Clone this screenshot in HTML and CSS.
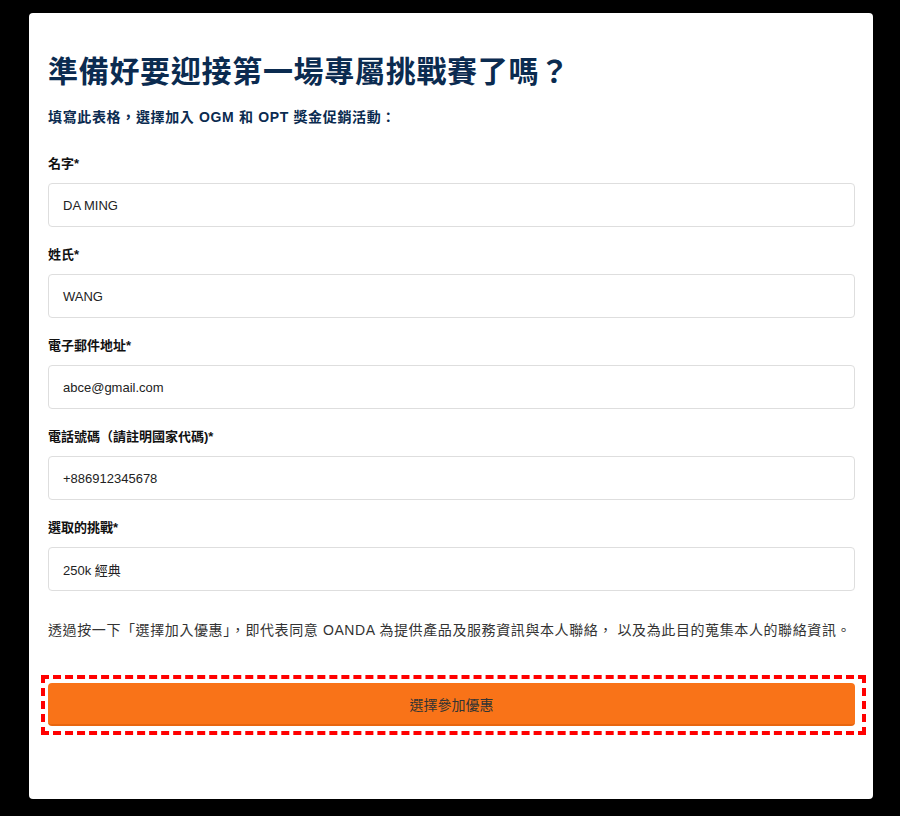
FILE: index.html
```html
<!DOCTYPE html>
<html lang="zh-Hant">
<head>
<meta charset="utf-8">
<title>準備好要迎接第一場專屬挑戰賽了嗎？</title>
<link rel="stylesheet" href="styles.css">
</head>
<body>
<main class="card">
  <h1 class="title">準備好要迎接第一場專屬挑戰賽了嗎？</h1>
  <p class="subtitle">填寫此表格，選擇加入 OGM 和 OPT 獎金促銷活動：</p>
  <form class="form">
    <div class="field">
      <label class="label">名字*</label>
      <div class="input">DA MING</div>
    </div>
    <div class="field">
      <label class="label">姓氏*</label>
      <div class="input">WANG</div>
    </div>
    <div class="field">
      <label class="label">電子郵件地址*</label>
      <div class="input">abce@gmail.com</div>
    </div>
    <div class="field">
      <label class="label">電話號碼（請註明國家代碼)*</label>
      <div class="input">+886912345678</div>
    </div>
    <div class="field">
      <label class="label">選取的挑戰*</label>
      <div class="input">250k 經典</div>
    </div>
    <p class="consent">透過按一下「選擇加入優惠」，即代表同意 OANDA 為提供產品及服務資訊與本人聯絡， 以及為此目的蒐集本人的聯絡資訊。</p>
    <div class="cta-frame">
      <button type="button" class="cta">選擇參加優惠</button>
    </div>
  </form>
</main>
</body>
</html>
```

FILE: styles.css
```css
html, body {
  margin: 0;
  padding: 0;
  background: #000;
}
body {
  font-family: "Liberation Sans", "Noto Sans CJK TC", sans-serif;
  padding: 13px 27px 17px 29px;
}
.card {
  background: #fff;
  border-radius: 4px;
  height: 786px;
  box-sizing: border-box;
  padding: 38px 18px 0 19px;
}
.title {
  margin: 0;
  font-family: "Noto Sans CJK TC", sans-serif;
  font-size: 30px;
  line-height: 36px;
  font-weight: 700;
  color: #0b2b50;
  letter-spacing: 0.7px;
}
.subtitle {
  margin: 20px 0 0;
  font-size: 14px;
  line-height: 20px;
  font-weight: 700;
  color: #0b2b50;
  letter-spacing: 0.65px;
}
.form {
  margin-top: 28px;
  display: flex;
  flex-direction: column;
}
.field {
  display: flex;
  flex-direction: column;
  gap: 10px;
  margin-bottom: 19px;
}
.label {
  font-size: 13px;
  line-height: 18px;
  font-weight: 700;
  color: #111;
}
.input {
  height: 44px;
  box-sizing: border-box;
  border: 1px solid #dedede;
  border-radius: 4px;
  padding: 0 14px;
  display: flex;
  align-items: center;
  font-size: 13px;
  color: #222;
}
.consent {
  margin: 10px 0 0;
  font-size: 14px;
  line-height: 20px;
  color: #333;
  letter-spacing: 0.6px;
}
.cta-frame {
  margin: 35px -11px 0 -7px;
  padding: 4px 7px 5px 3px;
  border: 4px dashed #f00;
}
.cta {
  display: block;
  width: 100%;
  height: 43px;
  border: none;
  border-bottom: 2px solid #e8660f;
  border-radius: 4px;
  background: #f97318;
  font-family: "Liberation Sans", "Noto Sans CJK TC", sans-serif;
  font-size: 14px;
  color: #333;
  cursor: pointer;
}
```
